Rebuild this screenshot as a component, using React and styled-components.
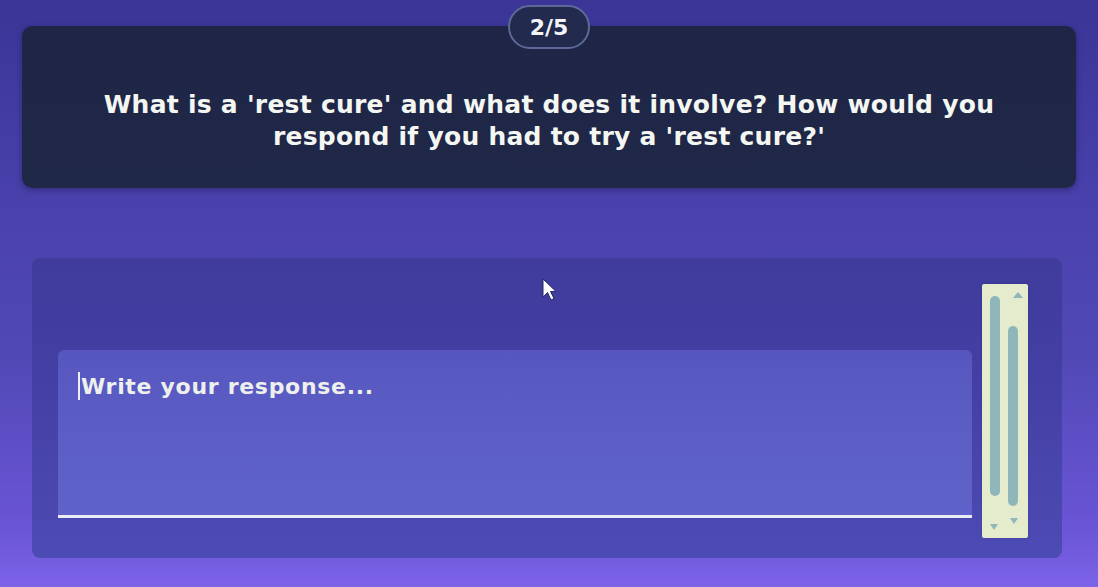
import React from "react";
import styled, { createGlobalStyle } from "styled-components";

const Global = createGlobalStyle`
  html, body { margin: 0; padding: 0; }
  body {
    width: 1098px;
    height: 587px;
    overflow: hidden;
    font-family: "DejaVu Sans", "Open Sans", "Liberation Sans", sans-serif;
    background: linear-gradient(180deg, #3a3596 0%, #4a41ad 35%, #5048b4 60%, #6a55d6 90%, #7d63e8 100%);
  }
`;

const Page = styled.div`
  width: 1098px;
  height: 587px;
  box-sizing: border-box;
  padding: 26px 22px 0 22px;
  display: flex;
  flex-direction: column;
`;

const QuestionWrap = styled.div`
  position: relative;
`;

const Counter = styled.div`
  position: absolute;
  left: 50%;
  top: -21px;
  transform: translateX(-50%);
  width: 82px;
  height: 44px;
  border-radius: 22px;
  background: #222b4d;
  border: 2px solid #5d6a98;
  box-sizing: border-box;
  display: flex;
  align-items: center;
  justify-content: center;
  color: #f2f4f6;
  font-weight: 700;
  font-size: 22px;
`;

const QuestionCard = styled.div`
  height: 162px;
  border-radius: 10px;
  background: linear-gradient(180deg, #1e2546 0%, #202848 100%);
  box-shadow: 0 2px 6px rgba(10, 10, 40, 0.35);
  display: flex;
  align-items: center;
  justify-content: center;
  padding: 28px 20px 0 20px;
  box-sizing: border-box;
`;

const QuestionText = styled.p`
  margin: 0;
  color: #f4f6f2;
  font-weight: 700;
  font-size: 25px;
  line-height: 32px;
  letter-spacing: 0.25px;
  text-align: center;
`;

const ResponsePanel = styled.div`
  margin: 70px 14px 0 10px;
  height: 300px;
  border-radius: 8px;
  background: linear-gradient(180deg, #3f3c9c 0%, #433fa4 40%, #4d4bb4 100%);
  display: flex;
  align-items: stretch;
  padding: 18px 34px 28px 26px;
  box-sizing: border-box;
  gap: 10px;
  position: relative;
`;

const InputColumn = styled.div`
  flex: 1;
  display: flex;
  flex-direction: column;
  justify-content: flex-end;
`;

const InputBox = styled.div`
  height: 168px;
  border-radius: 6px 6px 0 0;
  background: linear-gradient(180deg, #5656be 0%, #5c5ec6 50%, #5f62c8 100%);
  border-bottom: 3px solid #e9ecf4;
  padding: 22px 20px;
  box-sizing: border-box;
  margin-bottom: 12px;
`;

const Placeholder = styled.div`
  color: #eef0ec;
  font-weight: 700;
  font-size: 22px;
  letter-spacing: 0.7px;
  display: flex;
  align-items: center;
  gap: 1px;
`;

const Caret = styled.span`
  display: inline-block;
  width: 2px;
  height: 28px;
  background: #eef0f4;
`;

const ScrollTrack = styled.div`
  width: 46px;
  background: #e5ebcd;
  border-radius: 2px;
  position: relative;
  margin-top: 8px;
  margin-bottom: -8px;
  box-shadow: 0 0 2px rgba(0, 0, 0, 0.2);
`;

const Cursor = styled.svg`
  position: absolute;
  left: 510px;
  top: 20px;
`;

function Scrollbar() {
  return (
    <ScrollTrack>
      <svg width="46" height="255" viewBox="0 0 46 255">
        <rect x="8" y="12" width="10" height="200" rx="5" fill="#8fb6b8" />
        <rect x="26" y="42" width="10" height="180" rx="5" fill="#8fb6b8" />
        <polygon points="36,8 41,14 31,14" fill="#8fb6b8" />
        <polygon points="8,240 16,240 12,246" fill="#8fb6b8" />
        <polygon points="28,234 36,234 32,240" fill="#8fb6b8" />
      </svg>
    </ScrollTrack>
  );
}

export default function App() {
  return (
    <>
      <Global />
      <Page>
        <QuestionWrap>
          <QuestionCard>
            <QuestionText>
              What is a 'rest cure' and what does it involve? How would you
              <br />
              respond if you had to try a 'rest cure?'
            </QuestionText>
          </QuestionCard>
          <Counter>2/5</Counter>
        </QuestionWrap>
        <ResponsePanel>
          <InputColumn>
            <InputBox>
              <Placeholder>
                <Caret />
                Write your response...
              </Placeholder>
            </InputBox>
          </InputColumn>
          <Scrollbar />
          <Cursor width="16" height="24" viewBox="0 0 16 24">
            <path d="M1 1 L1 19 L5.5 14.5 L9 22 L12 20.5 L8.5 13.5 L14 13.5 Z" fill="#ffffff" stroke="#2a2a60" strokeWidth="1" />
          </Cursor>
        </ResponsePanel>
      </Page>
    </>
  );
}
